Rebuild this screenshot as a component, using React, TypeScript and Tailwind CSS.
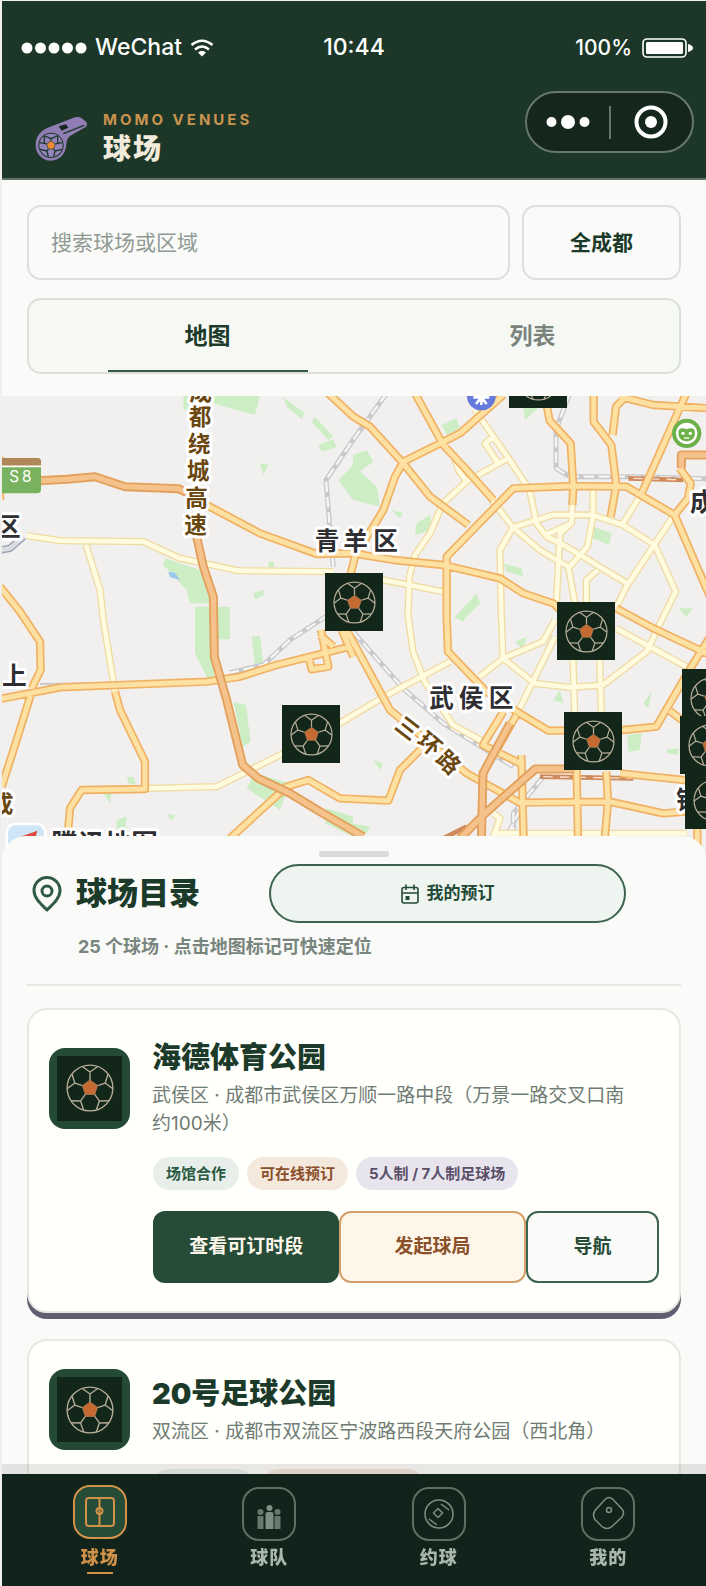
import { useState } from "react";
import type { ReactNode } from "react";
import clsx from "clsx";

type Tone = "green" | "orange" | "purple";

interface Venue {
  id: string;
  name: string;
  address: string;
  tags: { label: string; tone: Tone }[];
}

const VENUES: Venue[] = [
  {
    id: "haide",
    name: "海德体育公园",
    address: "武侯区 · 成都市武侯区万顺一路中段（万景一路交叉口南约100米）",
    tags: [
      { label: "场馆合作", tone: "green" },
      { label: "可在线预订", tone: "orange" },
      { label: "5人制 / 7人制足球场", tone: "purple" },
    ],
  },
  {
    id: "no20",
    name: "20号足球公园",
    address: "双流区 · 成都市双流区宁波路西段天府公园（西北角）",
    tags: [
      { label: "可在线预订", tone: "green" },
      { label: "5人制 / 7人制足球场", tone: "orange" },
    ],
  },
];

const TONES: Record<Tone, string> = {
  green: "bg-[#e8efeb] text-[#2a5a40]",
  orange: "bg-[#f5e9de] text-[#8a4f2a]",
  purple: "bg-[#e8e4ee] text-[#5a5068]",
};

const MARKERS = [
  { x: 507, y: -46 },
  { x: 323, y: 177 },
  { x: 555, y: 206 },
  { x: 280, y: 309 },
  { x: 562, y: 316 },
  { x: 680, y: 273 },
  { x: 678, y: 320 },
  { x: 683, y: 375 },
];

function polar(r: number, deg: number) {
  const a = (deg * Math.PI) / 180;
  return `${(r * Math.cos(a)).toFixed(2)} ${(r * Math.sin(a)).toFixed(2)}`;
}

const SPOKES = [-90, -18, 54, 126, 198];
const PENTAGON = `M${SPOKES.map((a) => polar(7, a)).join("L")}Z`;
const SEAMS = SPOKES.map(
  (a) =>
    `M${polar(7, a)}L${polar(14, a)}M${polar(20, a - 20)}L${polar(14, a)}L${polar(20, a + 20)}`,
).join("");

function Football({ className }: { className?: string }) {
  return (
    <svg viewBox="-21 -21 42 42" className={className} aria-hidden="true">
      <g fill="none" stroke="#b5ab97" strokeWidth="1.2">
        <circle r="20" />
        <path d={SEAMS} />
      </g>
      <path d={PENTAGON} fill="#c46a32" stroke="#b98a5f" strokeWidth="0.6" />
    </svg>
  );
}

function Whistle() {
  return (
    <svg viewBox="102 342 162 141" className="h-[47px] w-[54px]" aria-hidden="true">
      <path
        d="M152 479a46 46 0 0 1-45-47c0-26 14-42 36-52l82-31c8-2 14-2 20 3l13 10c4 4 4 13-1 16l-46 26c-7 5-11 13-12 26-1 30-21 49-47 49Z"
        fill="#8f7db3"
      />
      <path d="M176 376l22-6 7 10-20 9Z" fill="#17281f" />
      <path d="M190 398l62-25" stroke="#1b3728" strokeWidth="4" />
      <circle cx="153" cy="433" r="38" fill="#1b3728" />
      <g transform="translate(153 433)" fill="#9483b8">
        <circle r="35" />
        <g stroke="#1b3728" strokeWidth="4" fill="none">
          <path d="M0-14V-20M-18-28L0-20L18-28M13-4L20-6M20-6L34-8M20-6L20-28M8 11L12 17M12 17L8 34M12 17L33 12M-8 11L-12 17M-12 17L-8 34M-12 17L-33 12M-13-4L-20-6M-20-6L-34-8M-20-6L-20-28" />
        </g>
        <path d="M0-14L13-4L8 11H-8L-13-4Z" fill="#ee8a32" stroke="#1b3728" strokeWidth="2" />
      </g>
    </svg>
  );
}

const HIGHWAYS =
  "M100 273L200 268L285 260L375 290L535 296L575 315M590 440L610 530L640 620L643 800L680 930L728 1125L775 1165L870 1210L960 1265L1090 1340M1720 1137H1606L1455 1270L1380 1345M1530 1000L1449 1150L1444 1350M2130 195H2044V235";

const MAIN_ROADS =
  "M620 345L780 430L950 492L1059 490L1180 510L1330 525L1500 565L1570 610L1660 640L1700 680M1849 655L1960 715L2130 795M0 590L60 665L120 755L122 840L95 895M0 927L180 892L620 875L720 860L830 825L1050 770M92 915L50 1050L5 1190M345 905L360 960L435 1115V1197L245 1200L210 1255L202 1350M690 1345L860 1190L925 1170L1020 1225L1165 1232L1200 1140L1270 1070M985 10L1060 80L1110 110L1210 220L1290 320L1405 405M1510 15L1380 130L1330 155L1210 215L1185 260L1150 360L1065 500L1050 560M1245 10L1330 165L1400 240L1480 330M2024 375L1879 290L1720 288L1540 295L1340 500V680L1344 785L1459 905L1559 970L1645 1022L1870 1020L1969 1010L2059 855L2130 740M2024 375L2130 620M1639 40L1649 92L1712 160L1720 290L1717 345M1781 10V95L1834 165L1849 285L1832 380M1880 18L1848 50L1838 135M1859 20L1960 45L2130 55M2059 10L1925 310M2039 235L2072 280L2064 325L2024 375M1040 720L1170 960L1400 1150L1559 1238L1829 1235L1989 1270L2059 1265M1564 1095L1571 1350M1730 1140L1734 1350M1819 1145L1824 1235L1814 1350M1510 965L1449 1065L1560 1120M1549 975L1490 1080M1860 1150L2070 1172M2009 962L2045 990M963 720L985 830L935 838L925 795M960 735L1000 770M1025 720L1060 800M2092 1310V1400M0 200V330";

const SIDE_ROADS =
  "M80 437L180 452L430 455L540 505L590 515L715 542L1000 545M1140 568L1329 605M258 465L300 600L310 690L345 905M440 1195L650 1190L730 1150L870 1080M1010 1005L1170 910L1350 815M1439 860L1509 805L1629 755L1665 690M1425 60L1449 95L1529 210L1589 300L1609 400L1640 440L1700 470L1889 585M1480 140L1455 160L1495 220M1524 205L1399 275L1329 340L1290 430L1245 495L1228 560L1224 675L1239 785L1274 875L1359 1005L1459 1060M1360 190L1375 240L1400 275M1475 330L1539 412L1619 480L1705 530L1725 640M1504 680L1500 480L1539 412L1659 375H1779L1869 405L1964 465L2027 605L1985 690L1940 785L1809 885L1709 892L1604 880L1509 805L1504 675M2019 380L1879 590L1850 650M1779 295V380L1762 470L1709 530M1717 340L1714 400L1680 430L1669 640M1635 435L1714 400M1794 540L1759 570V640M1665 740L1559 955M1719 810L1724 970M1799 810L1804 970M1849 715L1949 770L2059 830M1925 310L1869 400M1480 1330H2060M1480 1270L1500 1285L1480 1340";

const RAILS =
  "M1160 10L1059 150L978 270L990 420L1000 530M985 675L870 750L790 825L690 848M1059 725L1209 895L1330 1000L1540 1130M1709 10L1668 120V235L1709 260H1900L2118 266M1630 1160L1540 1270L1540 1340M1560 1260L1520 1340";

// parks
const PARKS =
  "M550 18H600V60H550ZM640 18H780L765 75L640 40ZM850 22L915 70L905 88L860 50ZM945 80L1000 140L985 150L935 95ZM955 165L1000 148L1010 172L965 185ZM780 220L805 225L790 255ZM495 505L600 540L640 640L570 640L560 600L490 525ZM585 650H690V748H655L640 870L620 860L585 790ZM1059 195L1100 180L1120 215L1059 260ZM1059 225L1130 290L1140 350L1059 330L1015 270ZM1250 400L1290 375L1295 420L1245 435ZM1325 105L1370 85L1380 115L1340 135ZM1780 410L1835 430L1828 465L1780 445ZM1510 520L1565 535L1570 560L1520 545ZM755 740L780 738L790 820L765 825ZM700 935L738 945L752 1055L728 1070ZM765 1150L870 1180L840 1260L740 1195ZM980 1255L1059 1280V1340L975 1300ZM1930 940L1955 905L1945 955ZM1882 1035L1925 1030L1920 1080L1885 1085ZM350 1290L380 1280L375 1330L350 1315ZM310 1210L335 1205L330 1240ZM760 610L790 600L792 615L765 628ZM1565 18L1625 45L1575 90ZM1365 680L1430 610L1440 640L1400 680ZM1545 755L1580 740L1570 780ZM2035 655H2078L2060 680ZM1360 680L1400 675L1390 695ZM1120 1110L1150 1120L1140 1140ZM1059 1300L1110 1310L1100 1330H1059ZM1175 360L1210 370L1200 385ZM1660 930L1680 900L1690 940ZM2000 1080L2035 1075V1095L2000 1090ZM380 1160L400 1160L410 1185L385 1180ZM505 1272L525 1275L520 1290L505 1285ZM805 515H822V532H805Z";

function CityMap() {
  return (
    <svg
      viewBox="6 18 2112 1392"
      preserveAspectRatio="xMinYMin slice"
      className="block h-full w-full"
      role="img"
      aria-label="成都球场地图"
    >
      <rect width="2130" height="1420" fill="#f1f0ef" />
      <path d={PARKS} fill="#cdeec5" />
      <path d="M505 545L525 548L540 570L510 562Z" fill="#9cc8f0" />
      <g fill="none" strokeLinejoin="round">
        <path d={RAILS} stroke="#c9c9cb" strokeWidth="15" />
        <path d={RAILS} stroke="#f6f6f6" strokeWidth="7" strokeDasharray="32 14" />
        <path d="M120 882L600 876" stroke="#c9c9cb" strokeWidth="6" />
        <path d="M1885 265L2050 270M1620 1160L1900 1165M1330 1345L1400 1310" stroke="#cf8a5c" strokeWidth="14" />
        <path d="M1900 265L2050 270M1630 1160L1900 1165" stroke="#f8e4d4" strokeWidth="4" strokeDasharray="28 22" />
        <path d={SIDE_ROADS} stroke="#f0dba4" strokeWidth="22" />
        <path d={SIDE_ROADS} stroke="#fffbdf" strokeWidth="14" />
        <path d={MAIN_ROADS} stroke="#f0b163" strokeWidth="25" />
        <path d={MAIN_ROADS} stroke="#fde1a2" strokeWidth="15" />
        <path d={HIGHWAYS} stroke="#e2a05c" strokeWidth="27" />
        <path d={HIGHWAYS} stroke="#f4c28a" strokeWidth="16" />
        <path d="M0 480L30 475L70 440" stroke="#9aa0ad" strokeWidth="22" />
        <path d="M0 480L30 475L70 440" stroke="#d9dde6" strokeWidth="14" />
      </g>
      <g
        fontFamily="'Noto Sans CJK SC', sans-serif"
        fontWeight="700"
        stroke="#ffffff"
        strokeWidth="18"
        strokeLinejoin="round"
        paintOrder="stroke"
      >
        <g fill="#6b4710" fontSize="68">
          <text x="568" y="30">成</text>
          <text x="566" y="106">都</text>
          <text x="564" y="185">绕</text>
          <text x="560" y="266">城</text>
          <text x="556" y="347">高</text>
          <text x="553" y="429">速</text>
          <text x="-28" y="1265">成</text>
          <g textAnchor="middle">
            <text transform="translate(1222 1015) rotate(38)" y="24">三</text>
            <text transform="translate(1289 1062) rotate(40)" y="24">环</text>
            <text transform="translate(1345 1117) rotate(44)" y="24">路</text>
          </g>
        </g>
        <g fill="#2f2f33" fontSize="74">
          <text x="944 1030 1120" y="481">青羊区</text>
          <text x="1288 1376 1466" y="951">武侯区</text>
          <text x="2070" y="364">成</text>
          <text x="-12" y="439">区</text>
          <text x="6" y="884">上</text>
          <text x="2029" y="1257">锦</text>
          <text x="154" y="1390" fontSize="80">腾讯地图</text>
        </g>
      </g>
      <rect x="20" y="1302" width="116" height="110" rx="26" fill="#cfe6f8" stroke="#ffffff" strokeWidth="8" />
      <path d="M62 1340L112 1322L104 1350Z" fill="#e0483c" />
      <rect x="-10" y="204" width="133" height="106" rx="12" fill="#79b25e" />
      <path d="M-10 228V204H111a12 12 0 0 1 12 12V228Z" fill="#b08756" />
      <path d="M0 229H123" stroke="#ffffff" strokeWidth="5" />
      <text x="28 66" y="276" fontSize="46" fontFamily="Inter, sans-serif" fill="#ffffff">
        S8
      </text>
      <circle cx="1444" cy="18" r="43" fill="#6679dd" />
      <path d="M1420 22H1468M1444 0V45M1428 42L1444 22L1460 42" stroke="#ffffff" strokeWidth="8" fill="none" />
      <circle cx="2060" cy="130" r="44" fill="#6db14a" />
      <circle cx="2060" cy="130" r="32" fill="#ffffff" />
      <path d="M2036 124c0-10 12-12 24-6 12-6 24-4 24 6 4 18-8 30-24 30s-28-12-24-30Z" fill="#6db14a" />
      <circle cx="2049" cy="130" r="5" fill="#ffffff" />
      <circle cx="2071" cy="130" r="5" fill="#ffffff" />
      <path d="M2052 144H2068" stroke="#ffffff" strokeWidth="4" />
    </svg>
  );
}

function VenueCard({ venue }: { venue: Venue }) {
  return (
    <article className="rounded-[20px] border-2 border-[#e6e8e3] bg-[#fffffb] px-5 pt-[28px] pb-[28px] shadow-[0_6px_0_#625d70]">
      <div className="flex items-center gap-[22px]">
        <div className="grid size-[81px] shrink-0 place-items-center rounded-2xl bg-[#244a36]">
          <div className="grid size-[65px] place-items-center bg-[#12271a]">
            <Football className="size-[48px]" />
          </div>
        </div>
        <div className="pr-6">
          <h3 className="text-[29px] leading-10 font-black text-[#1b3a2a]">{venue.name}</h3>
          <p className="mt-1 text-[19px] leading-7 text-[#6f7c74]">{venue.address}</p>
        </div>
      </div>

      <div className="ml-[104px]">
        <ul className="mt-[19px] flex gap-2">
          {venue.tags.map((tag) => (
            <li
              key={tag.label}
              className={clsx(
                "rounded-full px-[13px] text-[15px] leading-[33px] font-bold whitespace-nowrap",
                TONES[tag.tone],
              )}
            >
              {tag.label}
            </li>
          ))}
        </ul>
        <div className="mt-[21px] grid h-[72px] grid-cols-[7fr_7fr_5fr] text-[19px] font-bold">
          <button type="button" className="rounded-xl bg-[#264b37] text-[#fbf6e9]">
            查看可订时段
          </button>
          <button
            type="button"
            className="rounded-xl border-2 border-[#d3a06a] bg-[#fff6ea] text-[#8a5029]"
          >
            发起球局
          </button>
          <button
            type="button"
            className="rounded-xl border-2 border-[#3a6350] bg-[#fafaf8] text-[#264b37]"
          >
            导航
          </button>
        </div>
      </div>
    </article>
  );
}

const NAV_ITEMS: { id: string; label: string; icon: ReactNode }[] = [
  {
    id: "venues",
    label: "球场",
    icon: (
      <g fill="none" stroke="currentColor" strokeWidth="2">
        <rect x="13" y="13" width="28" height="28" rx="3" />
        <path d="M26.500 13V41" />
        <circle cx="26.500" cy="26" r="3" />
      </g>
    ),
  },
  {
    id: "teams",
    label: "球队",
    icon: (
      <g fill="currentColor">
        <g opacity="0.8">
          <circle cx="18.500" cy="25" r="3" />
          <path d="M15.500 29h6v13h-6zM32.500 29h6v13h-6z" />
          <circle cx="35.500" cy="25" r="3" />
        </g>
        <circle cx="27.500" cy="21" r="3" />
        <path d="M23.500 27q0-2 2-2h4q2 0 2 2v15h-8z" />
      </g>
    ),
  },
  {
    id: "matches",
    label: "约球",
    icon: (
      <g fill="none" stroke="currentColor" strokeWidth="1.500">
        <circle cx="27" cy="27" r="14" />
        <path d="M26 21.500L30.500 26L26 30.500L21.500 26ZM29 17L37 23M17 32L25 38" />
      </g>
    ),
  },
  {
    id: "me",
    label: "我的",
    icon: (
      <g fill="none" stroke="currentColor" strokeWidth="1.500">
        <path d="M24 12.500q4-4 8 0l9 9.500q3 4 0 8L31 39.500q-5 4-10 0l-7-7q-3-4 0-9Z" />
        <circle cx="28" cy="23" r="2.500" />
      </g>
    ),
  },
];

export default function App() {
  const [view, setView] = useState("map");
  const [tab, setTab] = useState("venues");

  return (
    <div className="flex h-screen flex-col overflow-hidden border-t border-l-2 border-t-[#eef2ee] border-l-[#efefee] bg-[#fafaf8] font-['Inter','Noto_Sans_CJK_SC',sans-serif]">
      <header className="shrink-0 border-b-2 border-[#5f7267] bg-[#1c3728] text-white">
        <div className="grid h-[88px] grid-cols-[1fr_auto_1fr] items-center px-[13px] pt-[5px] text-[23px] font-medium">
          <div className="flex items-center pl-[6px]">
            <svg viewBox="0 0 66 12" className="h-3 w-[66px]" fill="currentColor" aria-hidden="true">
              <circle cx="6" cy="6" r="5.500" />
              <circle cx="19.500" cy="6" r="5.500" />
              <circle cx="33" cy="6" r="5.500" />
              <circle cx="46.500" cy="6" r="5.500" />
              <circle cx="60" cy="6" r="5.500" />
            </svg>
            <span className="ml-2">WeChat</span>
            <svg
              viewBox="0 0 24 18"
              className="ml-2 h-[18px] w-6"
              fill="none"
              stroke="currentColor"
              strokeWidth="2.500"
              aria-hidden="true"
            >
              <path d="M1.500 6Q12-2.500 22.500 6M5 10.500Q12 4.500 19 10.500" />
              <path d="M8 13.500q4-3.500 8 0l-4 4z" fill="currentColor" stroke="none" />
            </svg>
          </div>
          <time>10:44</time>
          <div className="flex items-center justify-end text-[21px]">
            <span>100%</span>
            <svg viewBox="0 0 51 20" className="ml-[10px] h-5 w-[51px]" aria-label="电量">
              <rect x="1" y="1" width="43" height="18" rx="4" fill="none" stroke="#fff" strokeWidth="1.600" />
              <rect x="4" y="4" width="37" height="12" rx="1.500" fill="#fff" />
              <path d="M46 6q5 1.500 5 4t-5 4z" fill="#fff" />
            </svg>
          </div>
        </div>

        <div className="flex h-[89px] items-start pr-3 pl-8">
          <div className="mt-[26px]">
            <Whistle />
          </div>
          <div className="mt-[23px] ml-[15px]">
            <p className="text-[15px] leading-4 font-bold tracking-[3px] text-[#c8924f]">MOMO VENUES</p>
            <h1 className="mt-[3px] text-[28px] leading-9 font-black tracking-[2px] text-[#f2ebdc]">球场</h1>
          </div>
          <div className="mt-[2px] ml-auto flex h-[62px] w-[169px] items-center rounded-full border-2 border-[#66776d] bg-[#15271c]">
            <button type="button" aria-label="更多" className="grid h-full flex-1 place-items-center">
              <svg viewBox="0 0 44 14" className="h-[14px] w-11" fill="currentColor">
                <circle cx="5.500" cy="7" r="5" />
                <circle cx="22" cy="7" r="7" />
                <circle cx="38.500" cy="7" r="5" />
              </svg>
            </button>
            <span className="h-[33px] w-[2px] bg-[#66776d]" />
            <button type="button" aria-label="关闭" className="grid h-full flex-1 place-items-center">
              <svg viewBox="0 0 34 34" className="size-[34px]">
                <circle cx="17" cy="17" r="14.500" fill="none" stroke="#fff" strokeWidth="4" />
                <circle cx="17" cy="17" r="6" fill="#fff" />
              </svg>
            </button>
          </div>
        </div>
      </header>

      <section className="shrink-0 px-[25px] pt-[25px] pb-[22px]">
        <div className="flex h-[75px] gap-3">
          <input
            type="search"
            aria-label="搜索球场或区域"
            placeholder="搜索球场或区域"
            className="min-w-0 flex-1 rounded-[14px] border-2 border-[#dbe0dc] bg-transparent px-[22px] text-[21px] text-[#1b3a2a] outline-none placeholder:text-[#8f9993]"
          />
          <button
            type="button"
            className="w-[159px] rounded-[14px] border-2 border-[#dbe0dc] text-[21px] font-bold text-[#1b3a2a]"
          >
            全成都
          </button>
        </div>
        <div
          role="tablist"
          className="mt-[18px] grid h-[76px] grid-cols-2 rounded-[14px] border-2 border-[#dbe0dc] bg-[#f6f8f3] text-[23px] font-bold"
        >
          {[
            { id: "map", label: "地图" },
            { id: "list", label: "列表" },
          ].map((t) => (
            <button
              key={t.id}
              type="button"
              role="tab"
              aria-selected={view === t.id}
              onClick={() => setView(t.id)}
              className={clsx(
                "flex flex-col items-center pl-8",
                view === t.id ? "text-[#1b3a2a]" : "text-[#7a847d]",
              )}
            >
              <span className="flex flex-1 items-center">{t.label}</span>
              {view === t.id && <span className="-mt-[2px] h-[2px] w-[200px] bg-[#35584a]" />}
            </button>
          ))}
        </div>
      </section>

      <section className="relative h-[464px] shrink-0 overflow-hidden">
        <CityMap />
        {MARKERS.map((m) => (
          <button
            key={`${m.x}-${m.y}`}
            type="button"
            aria-label="球场标记"
            style={{ left: m.x, top: m.y }}
            className="absolute grid size-[58px] place-items-center bg-[#12271a]"
          >
            <Football className="size-[43px]" />
          </button>
        ))}
      </section>

      <main className="relative -mt-6 min-h-0 flex-1 overflow-y-auto rounded-t-[24px] bg-[#fafaf8] px-[25px] pt-[15px] [scrollbar-width:none]">
        <div className="mx-auto h-[6px] w-[70px] rounded-full bg-[#dadbd8]" />
        <div className="mt-[7px] flex items-center pr-[55px] pl-[5px]">
          <svg
            viewBox="0 0 30 36"
            className="h-9 w-[30px]"
            fill="none"
            stroke="#2f5a44"
            strokeWidth="3"
            aria-hidden="true"
          >
            <path d="M15 34C9 28 2 22 2 14.500a13 13 0 0 1 26 0C28 22 21 28 15 34Z" strokeLinejoin="round" />
            <circle cx="15" cy="15" r="5" />
          </svg>
          <h2 className="ml-[14px] text-[31px] font-black whitespace-nowrap text-[#1b3a2a]">球场目录</h2>
          <button
            type="button"
            className="ml-[69px] flex h-[59px] flex-1 items-center justify-center gap-2 rounded-full border-2 border-[#3a6350] bg-[#eef4f0] text-[17px] font-bold text-[#234a37]"
          >
            <svg
              viewBox="0 0 18 20"
              className="h-5 w-[18px]"
              fill="none"
              stroke="currentColor"
              strokeWidth="1.600"
              aria-hidden="true"
            >
              <rect x="1" y="3.500" width="16" height="15.500" rx="2" />
              <path d="M1 9H17M5 0.500V6M13 0.500V6" />
              <path d="M4.500 12h4v4h-4z" fill="currentColor" stroke="none" />
            </svg>
            我的预订
          </button>
        </div>
        <p className="mt-3 ml-[51px] text-[18px] leading-6 font-bold text-[#78857e]">
          25 个球场 · 点击地图标记可快速定位
        </p>
        <hr className="mt-[25px] border-t-2 border-[#e6e8e4]" />
        <div className="mt-[22px] space-y-[26px]">
          {VENUES.map((v) => (
            <VenueCard key={v.id} venue={v} />
          ))}
        </div>
      </main>

      <nav className="relative grid h-[112px] shrink-0 grid-cols-4 bg-[#11231a] px-[13px] shadow-[0_-10px_0_rgba(70,60,65,0.12)]">
        {NAV_ITEMS.map((item) => {
          const active = tab === item.id;
          return (
            <button
              key={item.id}
              type="button"
              onClick={() => setTab(item.id)}
              aria-current={active ? "page" : undefined}
              className={clsx(
                "flex flex-col items-center",
                active ? "pt-[11px] text-[#cf9248]" : "pt-[13px] text-[#a9b8ae]",
              )}
            >
              <span
                className={clsx(
                  "size-[54px] rounded-[17px] border-2",
                  active ? "border-[#cf9248] bg-[#264b37]" : "border-[#5d7066] text-[#7d8f85]",
                )}
              >
                <svg viewBox="2 2 50 50" className="size-full" aria-hidden="true">
                  {item.icon}
                </svg>
              </span>
              <span
                className={clsx(
                  "text-[18px] leading-6 font-black tracking-[1px]",
                  active ? "mt-[7px]" : "mt-[5px]",
                )}
              >
                {item.label}
              </span>
              {active && <span className="mt-[2px] h-[2px] w-[26px] bg-[#cf9248]" />}
            </button>
          );
        })}
      </nav>
    </div>
  );
}
